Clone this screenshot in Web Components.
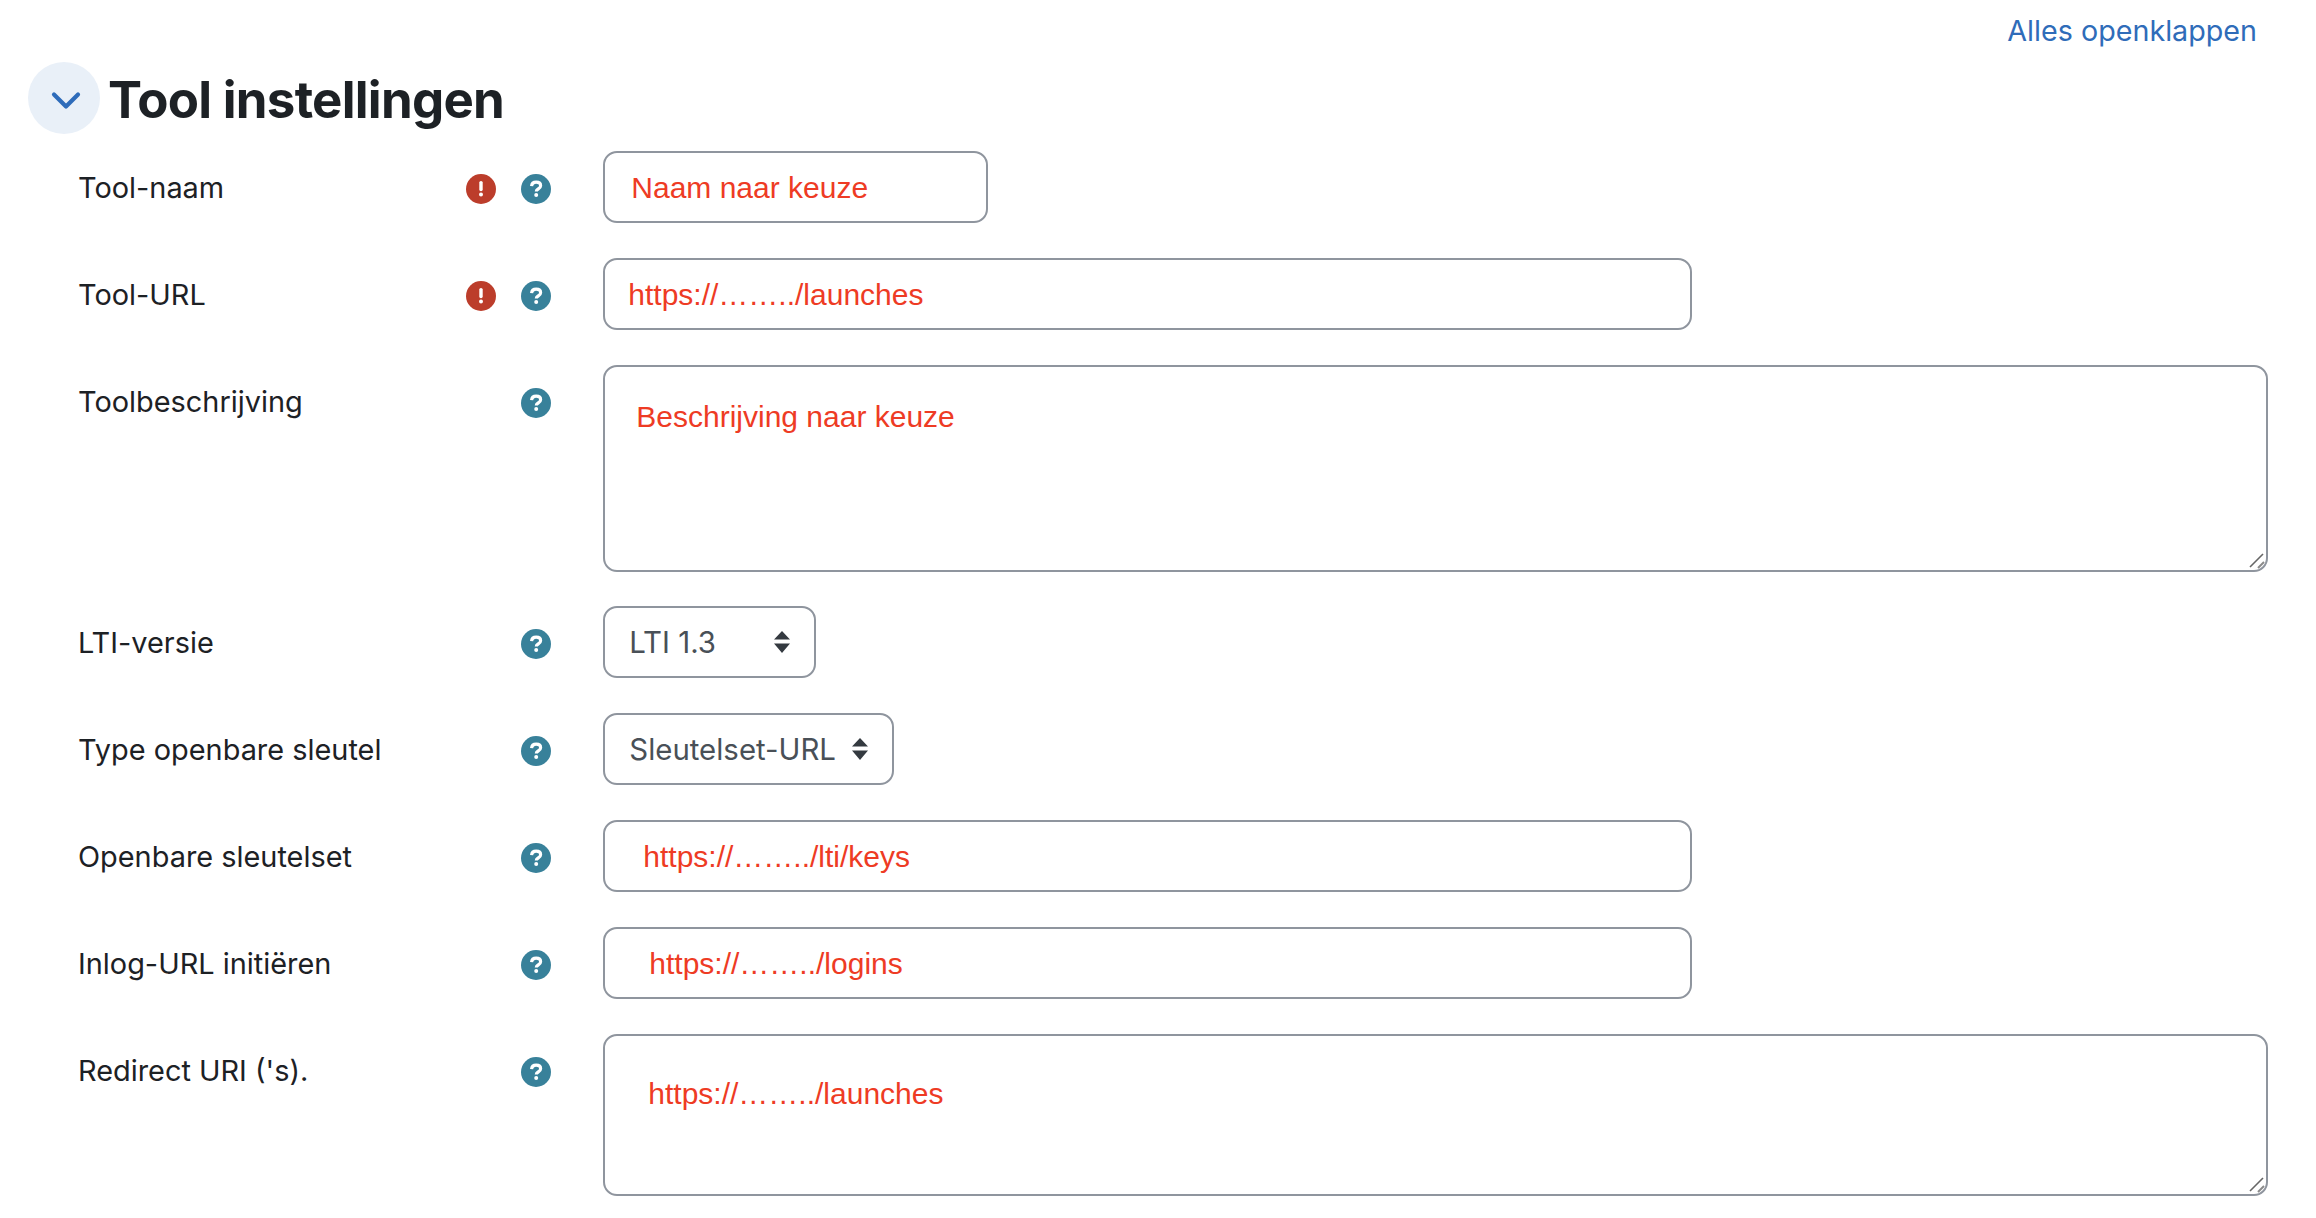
<!DOCTYPE html>
<html lang="nl">
<head>
<meta charset="utf-8">
<title>Tool instellingen</title>
<style>
html,body{margin:0;padding:0;background:#fff;}
body{width:2316px;height:1218px;overflow:hidden;font-family:Inter,"Noto Sans",sans-serif;color:#1d2125;}
</style>
</head>
<body>
<lti-form>
  <collapse-link slot="top">Alles openklappen</collapse-link>
  <section-head slot="head">Tool instellingen</section-head>

  <form-row label="Tool-naam" required>
    <text-box width="385" pad="26">Naam naar keuze</text-box>
  </form-row>
  <form-row label="Tool-URL" required>
    <text-box width="1089" pad="23">https://……../launches</text-box>
  </form-row>
  <form-row label="Toolbeschrijving" tight>
    <area-box height="207" pad="31" top="32">Beschrijving naar keuze</area-box>
  </form-row>
  <form-row label="LTI-versie">
    <select-box width="213">LTI 1.3</select-box>
  </form-row>
  <form-row label="Type openbare sleutel">
    <select-box width="291">Sleutelset-URL</select-box>
  </form-row>
  <form-row label="Openbare sleutelset">
    <text-box width="1089" pad="38">https://……../lti/keys</text-box>
  </form-row>
  <form-row label="Inlog-URL initiëren">
    <text-box width="1089" pad="44">https://……../logins</text-box>
  </form-row>
  <form-row label="Redirect URI ('s).">
    <area-box height="162" pad="43" top="40">https://……../launches</area-box>
  </form-row>
</lti-form>

<template id="t-form">
  <style>
    :host{display:flex;flex-direction:column;width:2316px;box-sizing:border-box;}
    .top{display:flex;justify-content:flex-end;padding:13px 59px 0 0;height:62px;box-sizing:border-box;}
    .head{padding:0 0 17.3px 28px;}
    .rows{display:flex;flex-direction:column;}
  </style>
  <div class="top"><slot name="top"></slot></div>
  <div class="head"><slot name="head"></slot></div>
  <div class="rows"><slot></slot></div>
</template>

<template id="t-link">
  <style>
    :host{display:block;font:400 28.7px/36px Inter,"Noto Sans",sans-serif;color:#2f6cb9;}
  </style>
  <slot></slot>
</template>

<template id="t-head">
  <style>
    :host{display:flex;align-items:center;gap:8px;height:72px;}
    .btn{width:72px;height:72px;border-radius:50%;background:#e9f0f8;display:flex;align-items:center;justify-content:center;flex:none;}
    svg{display:block;width:32px;height:20px;margin-left:4px;margin-top:5px;}
    h2{margin:0;padding-top:3px;font:700 51px/72px Inter,"Noto Sans",sans-serif;color:#1d2125;letter-spacing:-.75px;}
  </style>
  <div class="btn"><svg viewBox="0 0 32 20" aria-hidden="true"><path d="M4 3.5 16 15.5 28 3.5" fill="none" stroke="#2e6cba" stroke-width="4.2" stroke-linecap="round" stroke-linejoin="round"/></svg></div>
  <h2><slot></slot></h2>
</template>

<template id="t-row">
  <style>
    :host{display:grid;grid-template-columns:388px 55px 82.3px 1fr;align-items:start;padding-left:78px;margin-bottom:35px;}
    :host([tight]){margin-bottom:33.4px;}
    .label{height:72px;font:400 28.9px/74px Inter,"Noto Sans",sans-serif;color:#1d2125;white-space:nowrap;}
    .ic{height:72px;display:flex;align-items:center;padding-top:4px;box-sizing:border-box;}
  </style>
  <div class="label"></div>
  <div class="ic req"></div>
  <div class="ic help"><status-icon kind="help"></status-icon></div>
  <div class="field"><slot></slot></div>
</template>

<template id="t-icon">
  <style>
    :host{display:block;width:30px;height:30px;}
    svg{display:block;width:30px;height:30px;}
  </style>
  <svg viewBox="0 0 30 30" aria-hidden="true"></svg>
</template>

<template id="t-text">
  <style>
    :host{display:flex;align-items:center;box-sizing:border-box;height:72px;padding-top:2px;border:2px solid #8f959e;border-radius:14px;background:#fff;
      font:400 30px/36px "Liberation Sans",Arial,sans-serif;color:#ee3b24;white-space:nowrap;}
  </style>
  <slot></slot>
</template>

<template id="t-area">
  <style>
    :host{display:block;position:relative;box-sizing:border-box;width:1665px;border:2px solid #8f959e;border-radius:14px;background:#fff;
      font:400 30px/36px "Liberation Sans",Arial,sans-serif;color:#ee3b24;white-space:nowrap;}
    svg{position:absolute;right:0;bottom:0;width:18px;height:18px;}
  </style>
  <slot></slot>
  <svg viewBox="0 0 18 18" aria-hidden="true"><path d="M2 15 15 2" stroke="#666" stroke-width="1.6"/><path d="M10 16 16 10" stroke="#8a8a8a" stroke-width="2"/></svg>
</template>

<template id="t-select">
  <style>
    :host{display:flex;align-items:center;justify-content:space-between;box-sizing:border-box;height:72px;border:2px solid #8f959e;border-radius:14px;background:#fff;padding:2px 24px 0 24px;
      font:400 29.4px/36px Inter,"Noto Sans",sans-serif;color:#495057;white-space:nowrap;}
    svg{display:block;width:16px;height:22px;flex:none;margin-top:-2px;}
  </style>
  <span><slot></slot></span>
  <svg viewBox="0 0 16 22" aria-hidden="true"><path d="M8 0 16 8.6H0Z M0 12.4H16L8 22Z" fill="#343a40"/></svg>
</template>

<script>
function shell(host, id){
  const root = host.attachShadow({mode:'open'});
  root.appendChild(document.getElementById(id).content.cloneNode(true));
  return root;
}
class LtiForm extends HTMLElement{constructor(){super();shell(this,'t-form');}}
class CollapseLink extends HTMLElement{constructor(){super();shell(this,'t-link');}}
class SectionHead extends HTMLElement{constructor(){super();shell(this,'t-head');}}
class StatusIcon extends HTMLElement{
  constructor(){super();this.root=shell(this,'t-icon');}
  connectedCallback(){
    const svg=this.root.querySelector('svg');
    svg.innerHTML=this.getAttribute('kind')==='error'
      ? '<circle cx="15" cy="15" r="15" fill="#bc3d2b"/><path d="M15 8.6V15.6" stroke="#fff" stroke-width="3.4" stroke-linecap="round"/><circle cx="15" cy="20.6" r="2" fill="#fff"/>'
      : '<circle cx="15" cy="15" r="15" fill="#38819a"/><path d="M10.6 12.2C10.8 9.6 12.7 8.2 15.2 8.2c2.6 0 4.4 1.4 4.4 3.5 0 1.7-1 2.5-2.4 3.3-1.2.7-1.9 1.2-1.9 2.4" fill="none" stroke="#fff" stroke-width="3.2"/><circle cx="15.2" cy="21" r="2" fill="#fff"/>';
  }
}
class FormRow extends HTMLElement{
  constructor(){super();this.root=shell(this,'t-row');}
  connectedCallback(){
    this.root.querySelector('.label').textContent=this.getAttribute('label');
    if(this.hasAttribute('required')){
      const i=document.createElement('status-icon');i.setAttribute('kind','error');
      this.root.querySelector('.req').appendChild(i);
    }
  }
}
class TextBox extends HTMLElement{
  constructor(){super();shell(this,'t-text');}
  connectedCallback(){
    this.style.width=this.getAttribute('width')+'px';
    this.style.paddingLeft=this.getAttribute('pad')+'px';
  }
}
class AreaBox extends HTMLElement{
  constructor(){super();shell(this,'t-area');}
  connectedCallback(){
    this.style.height=this.getAttribute('height')+'px';
    this.style.paddingLeft=this.getAttribute('pad')+'px';
    this.style.paddingTop=this.getAttribute('top')+'px';
  }
}
class SelectBox extends HTMLElement{
  constructor(){super();shell(this,'t-select');}
  connectedCallback(){this.style.width=this.getAttribute('width')+'px';}
}
customElements.define('status-icon',StatusIcon);
customElements.define('lti-form',LtiForm);
customElements.define('collapse-link',CollapseLink);
customElements.define('section-head',SectionHead);
customElements.define('form-row',FormRow);
customElements.define('text-box',TextBox);
customElements.define('area-box',AreaBox);
customElements.define('select-box',SelectBox);
</script>
</body>
</html>
